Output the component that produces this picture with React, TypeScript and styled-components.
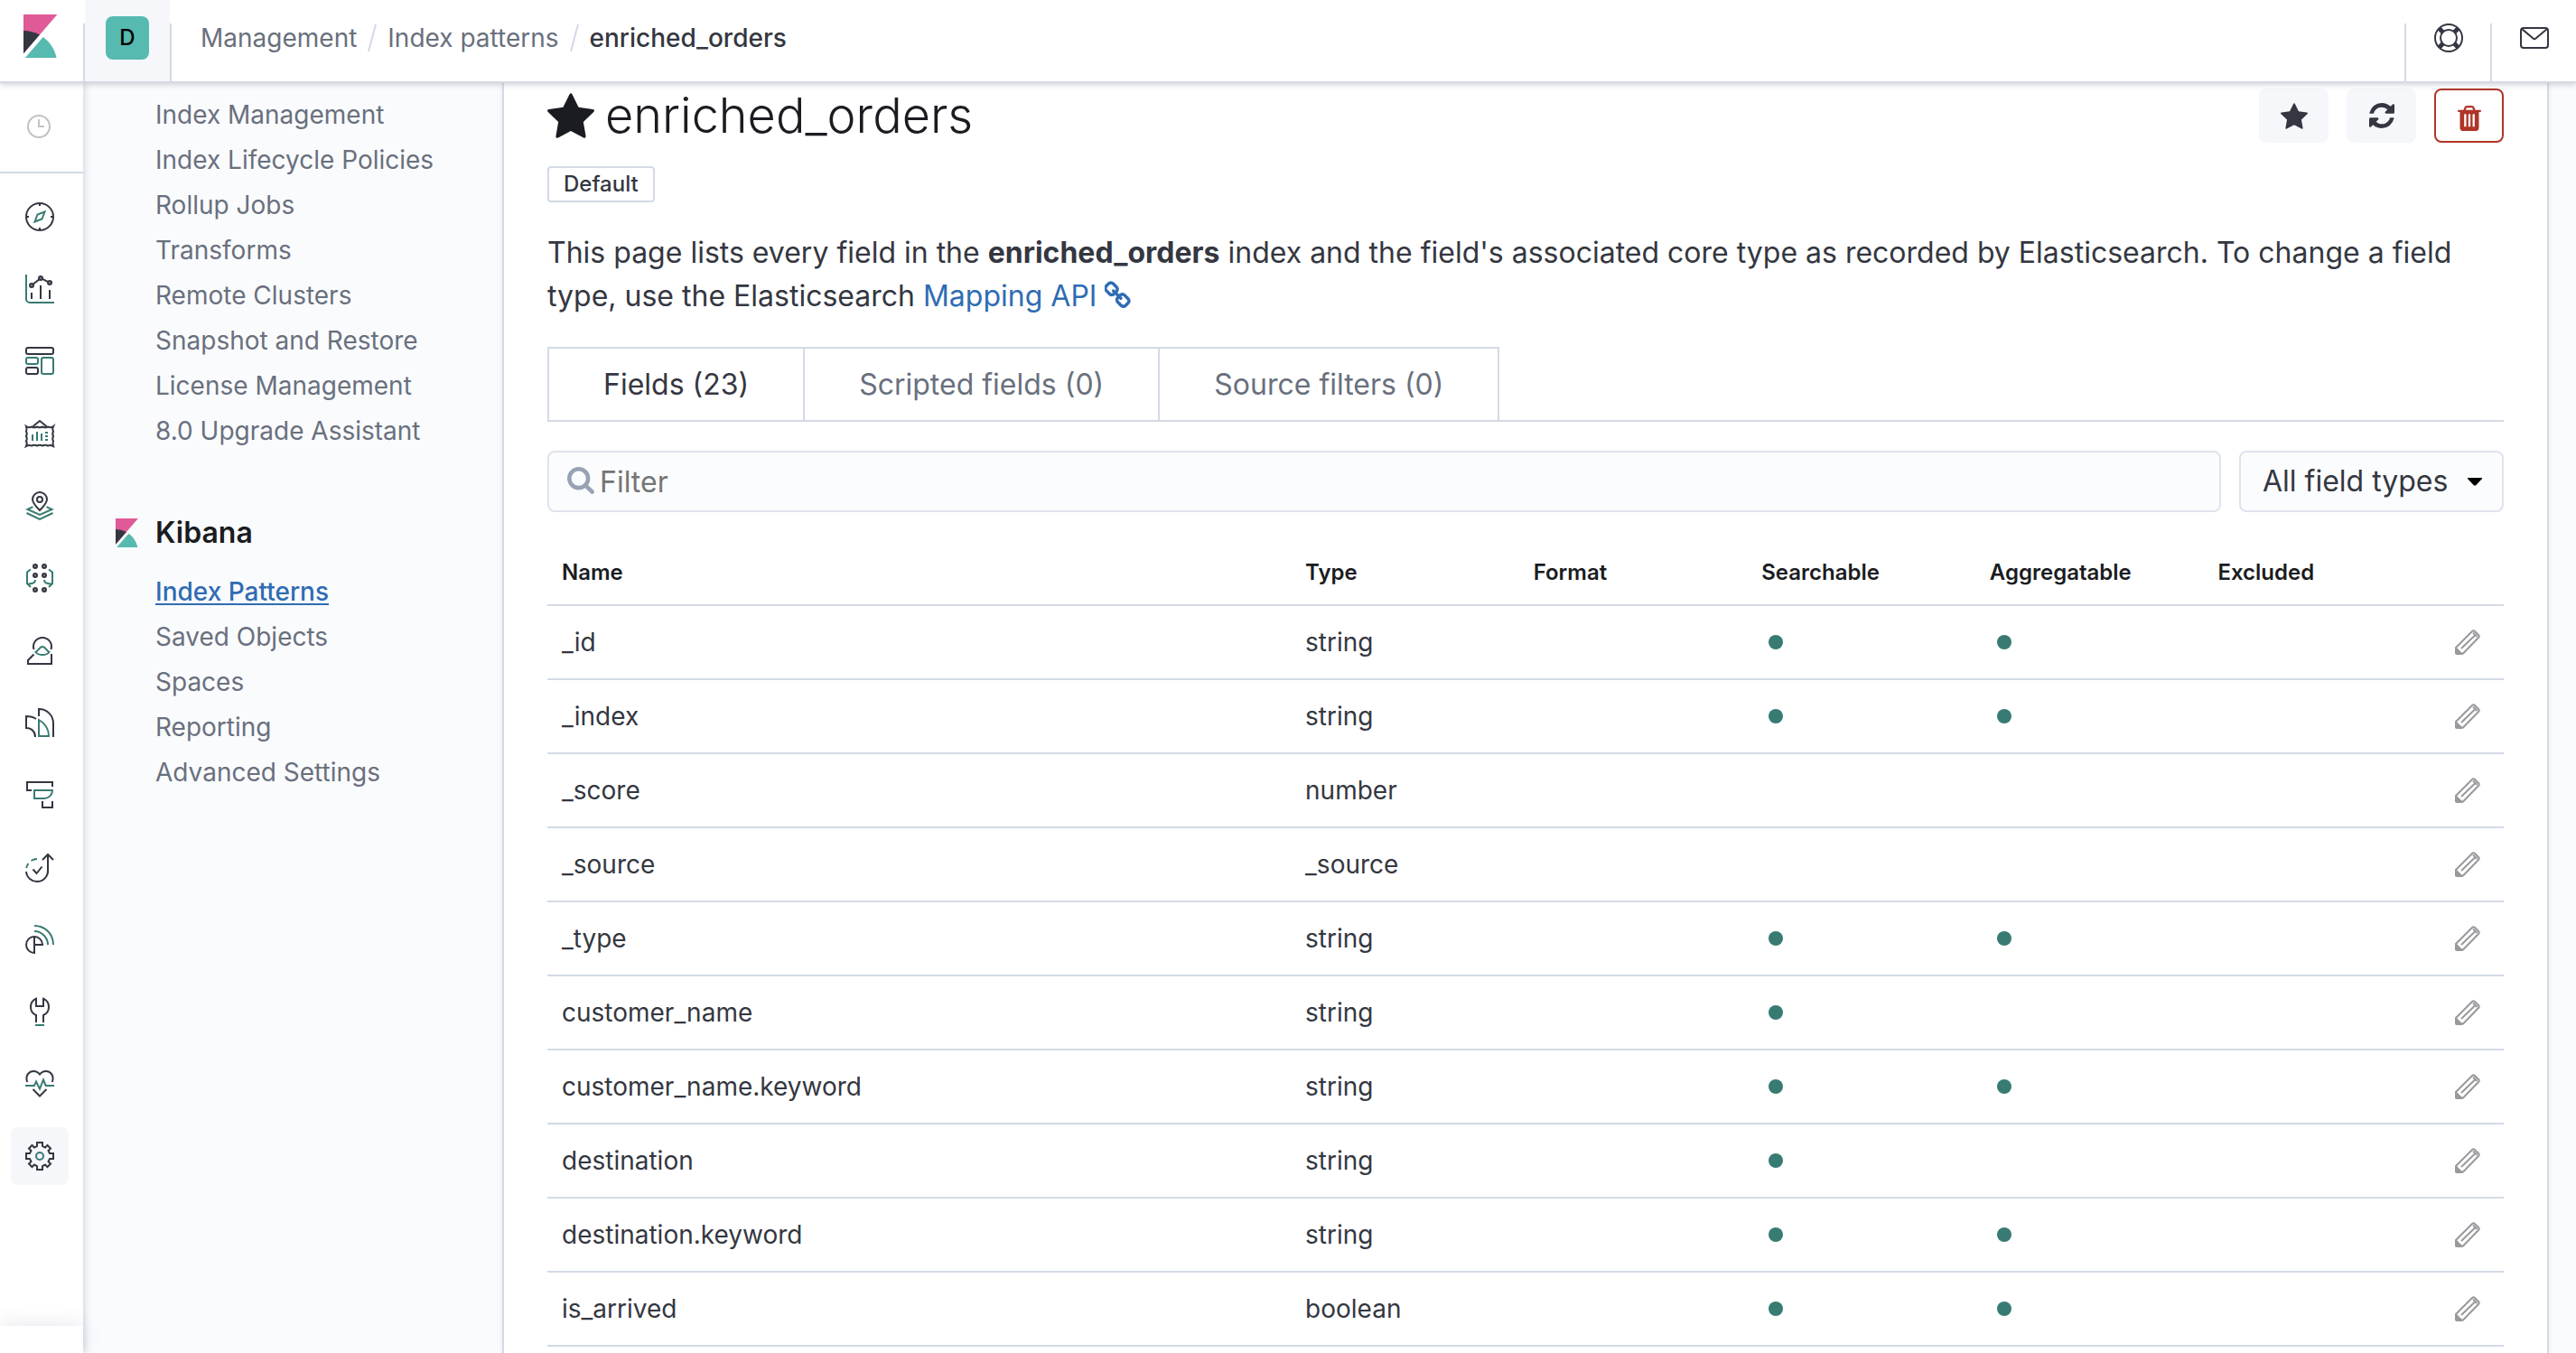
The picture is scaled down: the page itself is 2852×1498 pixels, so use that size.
import React from 'react';
import styled, { createGlobalStyle, css } from 'styled-components';

const color = {
  ink: '#343741',
  title: '#1a1c21',
  subdued: '#69707d',
  line: '#d3dae6',
  field: '#e0e3ee',
  page: '#fafbfd',
  shade: '#f5f7fa',
  link: '#2f6cb3',
  teal: '#387b73',
  danger: '#af3527',
};

const Global = createGlobalStyle`
  *, *::before, *::after { box-sizing: border-box; }
  body {
    margin: 0;
    background: ${color.page};
    color: ${color.ink};
    font-family: Inter, 'Liberation Sans', sans-serif;
    font-size: 28px;
    line-height: 48px;
  }
  button, input, select { font: inherit; color: inherit; margin: 0; }
  button { border: 0; padding: 0; background: none; cursor: pointer; }
  a { color: inherit; text-decoration: none; }
  ul, ol { list-style: none; margin: 0; padding: 0; }
  h1, h2, p { margin: 0; }
  svg { display: block; flex: none; }
`;

const Shell = styled.div`
  display: flex;
  flex-direction: column;
  height: 100vh;
  overflow: hidden;
`;

/* ---------- header ---------- */

const Header = styled.header`
  position: relative;
  z-index: 3;
  display: flex;
  align-items: flex-end;
  flex: none;
  height: 92px;
  background: #fff;
  border-bottom: 2px solid ${color.line};
  box-shadow: 0 2px 6px rgba(105, 112, 125, 0.3);
`;

const HeaderRule = styled.span`
  flex: none;
  width: 2px;
  height: 64px;
  background: ${color.line};
`;

const HomeLink = styled.a`
  display: flex;
  align-self: stretch;
  width: 92px;
  padding: 16px 20px;
`;

const SpaceButton = styled.button`
  display: flex;
  align-self: stretch;
  justify-content: center;
  width: 94px;
  padding-top: 18px;
  background: ${color.shade};
`;

const SpaceAvatar = styled.span`
  width: 48px;
  height: 48px;
  border-radius: 8px;
  background: #57bab1;
  color: #000;
  font-size: 24px;
  font-weight: 500;
  line-height: 48px;
`;

const Breadcrumbs = styled.nav`
  flex: 1;
  align-self: stretch;
  padding: 18px 32px 0;

  ol {
    display: flex;
    align-items: center;
    gap: 12px;
  }
`;

const Crumb = styled.a<{ $current?: boolean }>`
  color: ${(p) => (p.$current ? color.ink : color.subdued)};
  font-weight: ${(p) => (p.$current ? 500 : 400)};
`;

const CrumbGroup = styled.li`
  display: flex;
  align-items: center;
  gap: 12px;
`;

const HeaderButton = styled.button`
  display: flex;
  align-self: stretch;
  justify-content: center;
  width: 93px;
  padding-top: 26px;
`;

/* ---------- app rail ---------- */

const Body = styled.div`
  display: flex;
  flex: 1;
  min-height: 0;
`;

const Rail = styled.nav`
  position: relative;
  z-index: 2;
  display: flex;
  flex-direction: column;
  flex: none;
  width: 92px;
  background: #fff;
  box-shadow: 1px 0 8px rgba(105, 112, 145, 0.3);
`;

const Recent = styled.button`
  display: flex;
  align-items: center;
  height: 100px;
  padding-left: 28px;
  border-bottom: 2px solid ${color.line};
`;

const RailList = styled.ul`
  display: flex;
  flex-direction: column;
  flex: 1;
  gap: 16px;
  padding: 16px 12px 0;
`;

const RailLink = styled.a<{ $active?: boolean }>`
  display: flex;
  align-items: center;
  justify-content: center;
  width: 64px;
  height: 64px;
  border-radius: 8px;
  background: ${(p) => (p.$active ? color.shade : 'transparent')};
`;

const RailFooter = styled.div`
  height: 30px;
  background: #fff;
  box-shadow: 0 -2px 20px rgba(105, 112, 145, 0.16);
`;

const Glyph = styled.svg`
  width: 32px;
  height: 32px;
  overflow: visible;
  fill: none;
  stroke: ${color.ink};
  stroke-width: 2;

  .t { stroke: ${color.teal}; }
  .d { fill: #888a92; }
`;

/* ---------- side navigation ---------- */

const SideNav = styled.nav`
  flex: none;
  width: 464px;
  padding: 10px 32px 0;
`;

const SideList = styled.ul`
  padding-left: 48px;
`;

const SideLink = styled.a<{ $active?: boolean }>`
  color: ${(p) => (p.$active ? color.link : color.subdued)};
  line-height: 50px;
  ${(p) =>
    p.$active &&
    css`
      font-weight: 500;
      text-decoration: underline;
      text-underline-offset: 3px;
      text-decoration-thickness: 2px;
    `}
`;

const SideHeading = styled.h2`
  display: flex;
  align-items: center;
  gap: 16px;
  margin: 64px 0 16px;
  color: ${color.title};
  font-size: 32px;
  font-weight: 600;
`;

/* ---------- main panel ---------- */

const Panel = styled.main`
  flex: 1;
  min-width: 0;
  margin-right: 30px;
  padding: 6px 48px 0;
  background: #fff;
  border: solid ${color.line};
  border-width: 0 2px;
  box-shadow: 0 0 6px rgba(105, 112, 145, 0.14);
`;

const TitleRow = styled.div`
  display: flex;
  align-items: center;
  justify-content: space-between;
  height: 60px;
`;

const Title = styled.h1`
  display: flex;
  align-items: center;
  gap: 12px;
  color: ${color.title};
  font-size: 54px;
  font-weight: 300;
  line-height: 60px;
`;

const Actions = styled.div`
  display: flex;
  gap: 20px;
`;

const ActionButton = styled.button<{ $danger?: boolean }>`
  display: flex;
  align-items: center;
  justify-content: center;
  width: 77px;
  height: 60px;
  border-radius: 8px;
  background: ${(p) => (p.$danger ? '#fff' : color.shade)};
  color: ${(p) => (p.$danger ? color.danger : color.ink)};
  border: ${(p) => (p.$danger ? `2px solid ${color.danger}` : '0')};
  padding-top: ${(p) => (p.$danger ? '6px' : '0')};
`;

const Badge = styled.span`
  display: block;
  width: fit-content;
  margin-top: 26px;
  padding: 0 16px;
  border: 2px solid ${color.line};
  border-radius: 4px;
  font-size: 24px;
  font-weight: 500;
  line-height: 36px;
`;

const Intro = styled.p`
  margin-top: 32px;
  font-size: 32px;

  strong { font-weight: 700; }

  a { color: ${color.link}; }

  svg {
    display: inline-block;
    vertical-align: -2px;
  }
`;

const Tabs = styled.div`
  display: flex;
  margin-top: 32px;
  border-bottom: 2px solid ${color.line};
`;

const Tab = styled.button<{ $active?: boolean }>`
  padding: 16px 60px;
  border: solid ${color.line};
  border-width: 2px 2px 0 0;
  color: ${(p) => (p.$active ? color.ink : color.subdued)};
  font-size: 32px;
  line-height: 47px;

  &:first-child { border-left-width: 2px; }
`;

const Filters = styled.form`
  display: flex;
  gap: 20px;
  margin-top: 32px;
`;

const Field = styled.label<{ $grow?: boolean }>`
  position: relative;
  flex: ${(p) => (p.$grow ? 1 : 'none')};
  font-size: 32px;
`;

const FieldIcon = styled.svg<{ $end?: boolean }>`
  position: absolute;
  top: ${(p) => (p.$end ? 30 : 18)}px;
  ${(p) => (p.$end ? 'right: 24px;' : 'left: 22px;')}
  pointer-events: none;
`;

const box = css`
  display: block;
  height: 68px;
  border: 2px solid ${color.field};
  border-radius: 8px;
  background: #fbfcfd;
  outline: 0;
`;

const TextBox = styled.input`
  ${box}
  width: 100%;
  padding: 0 24px 0 56px;

  &::placeholder { color: #757575; opacity: 1; }
`;

const Select = styled.select`
  ${box}
  appearance: none;
  width: 293px;
  padding: 0 56px 0 24px;
`;

const Table = styled.table`
  width: 100%;
  margin-top: 32px;
  table-layout: fixed;
  border-collapse: separate;
  border-spacing: 0;

  th, td {
    padding: 0 16px;
    border-bottom: 2px solid ${color.line};
    text-align: left;
    font-weight: 400;
  }

  td, tbody th { height: 82px; }

  thead th, thead td {
    height: 72px;
    color: ${color.title};
    font-size: 24px;
    font-weight: 600;
  }

  th:first-child { width: 38%; }
  td:last-child { width: 80px; }
`;

const Dot = styled.span`
  display: block;
  width: 16px;
  height: 16px;
  margin-left: 8px;
  border-radius: 50%;
  background: ${color.teal};
`;

const EditButton = styled.button`
  display: flex;
  align-items: center;
  justify-content: center;
  width: 48px;
  height: 48px;
`;

/* ---------- drawings ---------- */

const KibanaLogo = ({ size }: { size: number }) => (
  <svg width={size} height={size} viewBox="0 0 32 32" aria-hidden="true">
    <path fill="#df5a96" d="M4 0v28.789L28.935.017z" />
    <path fill="#343741" d="M4 12v16.789l11.906-13.738A24.721 24.721 0 0 0 4 12" />
    <path fill="#57bab1" d="M18.479 16.664 6.268 30.754l-1.073 1.237h23.191c-1.252-6.292-4.883-11.719-9.908-15.327" />
  </svg>
);

const Star = ({ width, height }: { width: number; height: number }) => (
  <svg width={width} height={height} viewBox="64 32 1664 1588" fill="currentColor" aria-hidden="true">
    <path d="M1728 647q0 22-26 48l-363 354 86 500q1 7 1 20 0 21-10.5 35.5t-30.5 14.5q-19 0-40-12l-449-236-449 236q-22 12-40 12-21 0-31.5-14.5t-10.5-35.5q0-6 2-20l86-500-364-354q-25-27-25-48 0-37 56-46l502-73 225-455q19-41 49-41t49 41l225 455 502 73q56 9 56 46z" />
  </svg>
);

const Refresh = () => (
  <svg width="28" height="28" viewBox="0 128 1536 1536" fill="currentColor" aria-hidden="true">
    <path d="M1511 1056q0 5-1 7-64 268-268 434.500t-478 166.500q-146 0-282.500-55t-243.500-157l-129 129q-19 19-45 19t-45-19-19-45v-448q0-26 19-45t45-19h448q26 0 45 19t19 45-19 45l-137 137q71 66 161 102t187 36q134 0 250-65t186-179q11-17 53-117 8-23 30-23h192q13 0 22.500 9.500t9.500 22.500zm25-800v448q0 26-19 45t-45 19h-448q-26 0-45-19t-19-45 19-45l138-138q-148-137-349-137-134 0-250 65t-186 179q-11 17-53 117-8 23-30 23h-199q-13 0-22.500-9.500t-9.500-22.500v-7q65-268 270-434.500t480-166.500q146 0 284 55.500t245 156.500l130-129q19-19 45-19t45 19 19 45z" />
  </svg>
);

const Trash = () => (
  <svg width="26" height="28" viewBox="192 128 1408 1536" fill="currentColor" aria-hidden="true">
    <path d="M704 1376v-704q0-14-9-23t-23-9h-64q-14 0-23 9t-9 23v704q0 14 9 23t23 9h64q14 0 23-9t9-23zm256 0v-704q0-14-9-23t-23-9h-64q-14 0-23 9t-9 23v704q0 14 9 23t23 9h64q14 0 23-9t9-23zm256 0v-704q0-14-9-23t-23-9h-64q-14 0-23 9t-9 23v704q0 14 9 23t23 9h64q14 0 23-9t9-23zm-544-992h448l-48-117q-7-9-17-11h-317q-10 2-17 11zm928 32v64q0 14-9 23t-23 9h-96v948q0 83-47 143.500t-113 60.500h-832q-66 0-113-58.500t-47-141.500v-952h-96q-14 0-23-9t-9-23v-64q0-14 9-23t23-9h309l70-167q15-37 54-63t79-26h320q40 0 79 26t54 63l70 167h309q14 0 23 9t9 23z" />
  </svg>
);

const Chain = () => (
  <svg width="30" height="30" viewBox="144 0 1504 1648" fill="currentColor" aria-hidden="true">
    <path d="M1456 1216q0-40-28-68l-208-208q-28-28-68-28-42 0-72 32 3 3 19 18.500t21.500 21.500 15 19 13 25.500 3.500 27.500q0 40-28 68t-68 28q-15 0-27.500-3.500t-25.500-13-19-15-21.500-21.500-18.500-19q-33 31-33 73 0 40 28 68l206 207q27 27 68 27 40 0 68-26l147-146q28-28 28-67zm-703-705q0-40-28-68l-206-207q-28-28-68-28-39 0-68 27l-147 146q-28 28-28 67 0 40 28 68l208 208q27 27 68 27 42 0 72-31-3-3-19-18.500t-21.500-21.500-15-19-13-25.500-3.500-27.500q0-40 28-68t68-28q15 0 27.500 3.500t25.500 13 19 15 21.500 21.500 18.500 19q33-31 33-73zm895 705q0 120-85 203l-147 146q-83 83-203 83-121 0-204-85l-206-207q-83-83-83-203 0-123 88-209l-88-88q-86 88-208 88-120 0-204-84l-208-208q-84-84-84-204t85-203l147-146q83-83 203-83 121 0 204 85l206 207q83 83 83 203 0 123-88 209l88 88q86-88 208-88 120 0 204 84l208 208q84 84 84 204z" />
  </svg>
);

const Slash = () => (
  <svg width="10" height="32" viewBox="0 0 10 32" aria-hidden="true">
    <path d="M9 1 1 31" stroke={color.line} strokeWidth="2" />
  </svg>
);

const Pencil = () => (
  <svg width="28" height="28" viewBox="0 0 28 28" fill="none" stroke="#98999c" strokeWidth="2" strokeLinejoin="round" aria-hidden="true">
    <path d="M1 20 19 2q1.500-1.500 3 0l4 4q1.500 1.500 0 3L9 26.500H2.500Q1 26.500 1 25zM20 3.500l4.500 4.500M7 21 22 6.500" />
    <path d="M1 20.500 7.500 27H2q-1 0-1-1z" fill="#98999c" />
  </svg>
);

const apps: { name: string; art: React.ReactNode }[] = [
  {
    name: 'Discover',
    art: (
      <>
        <circle cx="16" cy="16" r="15" />
        <path d="M16 1v3M16 28v3M1 16h3M28 16h3" />
        <path className="t" d="M21.500 10.500 18.500 18.500 10.500 21.500 13.500 13.500z" />
      </>
    ),
  },
  {
    name: 'Visualize',
    art: (
      <>
        <path className="t" d="M1 0v27a4 4 0 0 0 4 4h27" />
        <path d="M7 20v7M17 12v15M27 17v10M8.500 10.800 15.500 5.200M19 4.900 25.200 8.100" />
        <g className="d">
          <circle cx="7" cy="12" r="2" />
          <circle cx="17" cy="4" r="2" />
          <circle cx="27" cy="9" r="2" />
        </g>
      </>
    ),
  },
  {
    name: 'Dashboard',
    art: (
      <>
        <rect x="1" y="1" width="30" height="7" rx="2" />
        <rect className="t" x="1" y="12" width="13" height="7" rx="2" />
        <rect x="1" y="23" width="13" height="7" rx="2" />
        <rect className="t" x="18" y="12" width="13" height="18" rx="2" />
      </>
    ),
  },
  {
    name: 'Canvas',
    art: (
      <>
        <path d="M8.500 8 16 2l7.500 6" />
        <path d="M1 8q3 2 6 .500 3 1.500 6 0 3 1.500 6 0 3 1.500 6 0 3 1.500 6-.500-1.500 3 0 5.500-1.500 3 0 5.500-1.500 3 0 5.500-1 2.500 0 5.500-3-1.500-6-.500-3-1.500-6 0-3-1.500-6 0-3-1.500-6 0-3-1-6 .500 1.500-3 0-5.500 1.500-3 0-5.500 1.500-3 0-5.500 1-2.500 0-5.500z" />
        <path className="t" d="M8 17v7M13 14v10M18 16v8M22 15h3M22 19h3M22 23h3" />
      </>
    ),
  },
  {
    name: 'Maps',
    art: (
      <>
        <path d="M16 21C12 17 8 13 8 9a8 8 0 0 1 16 0c0 4-4 8-8 12z" />
        <circle cx="16" cy="9" r="3" />
        <path className="t" d="M8.500 17.200 2.500 20 16 26l13.500-6-6-2.800M1.500 24 16 31l14.500-7" />
      </>
    ),
  },
  {
    name: 'Machine Learning',
    art: (
      <>
        <g className="d">
          <circle cx="11" cy="3" r="2" />
          <circle cx="21" cy="3" r="2" />
          <circle cx="11" cy="13" r="2" />
          <circle cx="21" cy="13" r="2" />
          <circle cx="11" cy="29" r="2" />
          <circle cx="21" cy="29" r="2" />
        </g>
        <path className="t" d="M6 6.500 2 9.500V22l4 4M2 23c5-1 9-1 9-5M26 6.500l4 3V22l-4 4M30 23c-5-1-9-1-9-5" />
      </>
    ),
  },
  {
    name: 'Metrics',
    art: (
      <>
        <path d="M9.500 15A10 10 0 1 1 28.500 15" />
        <path d="M9.500 20.500 3 27v4h26V20" />
        <path className="t" d="M11.500 18c3-1.500 4-6 7.500-6s4.500 4.500 7.500 6c-3 4-12 4-15 0z" />
      </>
    ),
  },
  {
    name: 'Logs',
    art: (
      <>
        <path d="M15 9V1c9 0 16 7 16 16v15M12 12C9 10 5 9 1 9v13c6 0 10 4 10 10" />
        <path className="t" d="M15 13v18h11c0-8-4-14-11-18z" />
      </>
    ),
  },
  {
    name: 'APM',
    art: (
      <>
        <path d="M7 11H2V2h28v5M19 23v7h11v-7" />
        <path className="t" d="M10 11h20c0 5-4 9-9 9H10z" />
      </>
    ),
  },
  {
    name: 'Uptime',
    art: (
      <>
        <path d="M1 21a12 12 0 0 0 24-2V2M19 8l6-6 6 6M8.500 18.500l4 4.500 6-7.500" />
        <path className="t" d="M1.200 17A12 12 0 0 1 3.500 12M6.500 9A12 12 0 0 1 13 7" />
      </>
    ),
  },
  {
    name: 'SIEM',
    art: (
      <>
        <path d="M10 32V13M10 31a9 9 0 1 1 9-9h-9" />
        <path className="t" d="M10 7c8 0 15 7 15 15M10 1c12 0 21 9 21 21" />
      </>
    ),
  },
  {
    name: 'Dev Tools',
    art: (
      <>
        <path d="M12 28v-8c-3.500-1.500-6-5-6-9s2-7.500 6-9.300V10h8V1.700c4 1.800 6 5.300 6 9.300s-2.500 7.500-6 9v8" />
        <path className="t" d="M11 31h10" />
      </>
    ),
  },
  {
    name: 'Stack Monitoring',
    art: (
      <>
        <path d="M2.300 14C-.500 7 4 2 9 2c3 0 5.500 1.500 7 3.500C17.500 3.500 20 2 23 2c5 0 9.500 5 6.700 12M8.500 22l7.500 7.500 7.500-7.500" />
        <path className="t" d="M0 18h10l2-4.500 4 8 4-10 2.700 6.500H32" />
      </>
    ),
  },
  {
    name: 'Management',
    art: (
      <>
        <path d="M13 1h6v4l3 1.500 2.500-2.500L28 7.500 25.500 10l1.500 3h4v6h-4l-1.500 3 2.500 2.500-3.500 3.500-2.500-2.500-3 1.500v4h-6v-4l-3-1.500L7.500 28 4 24.500 6.500 22 5 19H1v-6h4l1.500-3L4 7.500 7.500 4 10 6.500 13 5z" />
        <circle className="t" cx="16" cy="16" r="4" />
      </>
    ),
  },
];

/* ---------- data ---------- */

const elasticsearchLinks = [
  'Index Management',
  'Index Lifecycle Policies',
  'Rollup Jobs',
  'Transforms',
  'Remote Clusters',
  'Snapshot and Restore',
  'License Management',
  '8.0 Upgrade Assistant',
];

const kibanaLinks = ['Index Patterns', 'Saved Objects', 'Spaces', 'Reporting', 'Advanced Settings'];

const fields = [
  { name: '_id', type: 'string', searchable: true, aggregatable: true },
  { name: '_index', type: 'string', searchable: true, aggregatable: true },
  { name: '_score', type: 'number' },
  { name: '_source', type: '_source' },
  { name: '_type', type: 'string', searchable: true, aggregatable: true },
  { name: 'customer_name', type: 'string', searchable: true },
  { name: 'customer_name.keyword', type: 'string', searchable: true, aggregatable: true },
  { name: 'destination', type: 'string', searchable: true },
  { name: 'destination.keyword', type: 'string', searchable: true, aggregatable: true },
  { name: 'is_arrived', type: 'boolean', searchable: true, aggregatable: true },
];

const tabs = ['Fields (23)', 'Scripted fields (0)', 'Source filters (0)'];
const columns = ['Name', 'Type', 'Format', 'Searchable', 'Aggregatable', 'Excluded'];

export default function App() {
  return (
    <Shell>
      <Global />
      <Header>
        <HomeLink href="#" aria-label="Kibana home">
          <KibanaLogo size={48} />
        </HomeLink>
        <HeaderRule />
        <SpaceButton type="button" aria-label="Default space">
          <SpaceAvatar>D</SpaceAvatar>
        </SpaceButton>
        <HeaderRule />
        <Breadcrumbs aria-label="Breadcrumbs">
          <ol>
            <CrumbGroup>
              <Crumb href="#">Management</Crumb>
              <Slash />
            </CrumbGroup>
            <CrumbGroup>
              <Crumb href="#">Index patterns</Crumb>
              <Slash />
            </CrumbGroup>
            <CrumbGroup>
              <Crumb $current href="#" aria-current="page">enriched_orders</Crumb>
            </CrumbGroup>
          </ol>
        </Breadcrumbs>
        <HeaderRule />
        <HeaderButton type="button" aria-label="Help">
          <Glyph viewBox="0 0 32 32">
            <circle cx="16" cy="16" r="15" />
            <circle cx="16" cy="16" r="9" />
            <path strokeWidth="5" d="m5.500 5.500 4 4M26.500 5.500l-4 4M5.500 26.500l4-4M26.500 26.500l-4-4" />
          </Glyph>
        </HeaderButton>
        <HeaderRule />
        <HeaderButton type="button" aria-label="Newsfeed">
          <Glyph viewBox="0 0 32 32">
            <rect x="1" y="5" width="30" height="22" rx="3" />
            <path d="m2 6 12.500 10.500q1.500 1.200 3 0L30 6" />
          </Glyph>
        </HeaderButton>
      </Header>

      <Body>
        <Rail aria-label="Applications">
          <Recent type="button" aria-label="Recently viewed">
            <Glyph viewBox="0 0 32 32" opacity="0.3">
              <circle cx="15" cy="15" r="12" />
              <path d="M15 7v8h6" />
            </Glyph>
          </Recent>
          <RailList>
            {apps.map((app) => (
              <li key={app.name}>
                <RailLink href="#" aria-label={app.name} $active={app.name === 'Management'}>
                  <Glyph viewBox="0 0 32 32">{app.art}</Glyph>
                </RailLink>
              </li>
            ))}
          </RailList>
          <RailFooter />
        </Rail>

        <SideNav aria-label="Management">
          <SideList>
            {elasticsearchLinks.map((label) => (
              <li key={label}>
                <SideLink href="#">{label}</SideLink>
              </li>
            ))}
          </SideList>
          <SideHeading>
            <KibanaLogo size={32} />
            Kibana
          </SideHeading>
          <SideList>
            {kibanaLinks.map((label, i) => (
              <li key={label}>
                <SideLink href="#" $active={i === 0}>{label}</SideLink>
              </li>
            ))}
          </SideList>
        </SideNav>

        <Panel>
          <TitleRow>
            <Title>
              <Star width={52} height={50} />
              enriched_orders
            </Title>
            <Actions>
              <ActionButton type="button" aria-label="Set as default index">
                <Star width={30} height={29} />
              </ActionButton>
              <ActionButton type="button" aria-label="Reload field list">
                <Refresh />
              </ActionButton>
              <ActionButton $danger type="button" aria-label="Remove index pattern">
                <Trash />
              </ActionButton>
            </Actions>
          </TitleRow>
          <Badge>Default</Badge>
          <Intro>
            This page lists every field in the <strong>enriched_orders</strong> index and the field's associated core
            type as recorded by Elasticsearch. To change a field type, use the Elasticsearch{' '}
            <a href="#">
              Mapping API <Chain />
            </a>
          </Intro>

          <Tabs role="tablist">
            {tabs.map((label, i) => (
              <Tab key={label} type="button" role="tab" aria-selected={i === 0} $active={i === 0}>
                {label}
              </Tab>
            ))}
          </Tabs>

          <Filters>
            <Field $grow>
              <TextBox type="text" placeholder="Filter" aria-label="Filter" />
              <FieldIcon width="30" height="30" viewBox="64 128 1664 1664" fill="#98a2b3">
                <path d="M1216 832q0-185-131.500-316.500t-316.500-131.500-316.500 131.500-131.500 316.500 131.500 316.500 316.500 131.500 316.500-131.500 131.500-316.500zm512 832q0 52-38 90t-90 38q-54 0-90-38l-343-342q-179 124-399 124-143 0-273.500-55.500t-225-150-150-225-55.500-273.500 55.500-273.500 150-225 225-150 273.500-55.500 273.500 55.500 225 150 150 225 55.500 273.500q0 220-124 399l343 343q37 37 37 90z" />
              </FieldIcon>
            </Field>
            <Field>
              <Select aria-label="Field type" defaultValue="all">
                <option value="all">All field types</option>
              </Select>
              <FieldIcon $end width="16" height="9" viewBox="0 0 16 9">
                <path d="M0 0h16v1L9 8.500H7L0 1z" />
              </FieldIcon>
            </Field>
          </Filters>

          <Table>
            <thead>
              <tr>
                {columns.map((label) => (
                  <th key={label} scope="col">{label}</th>
                ))}
                <td />
              </tr>
            </thead>
            <tbody>
              {fields.map((field) => (
                <tr key={field.name}>
                  <th scope="row">{field.name}</th>
                  <td>{field.type}</td>
                  <td />
                  <td>{field.searchable && <Dot />}</td>
                  <td>{field.aggregatable && <Dot />}</td>
                  <td />
                  <td>
                    <EditButton type="button" aria-label={`Edit ${field.name}`}>
                      <Pencil />
                    </EditButton>
                  </td>
                </tr>
              ))}
            </tbody>
          </Table>
        </Panel>
      </Body>
    </Shell>
  );
}
